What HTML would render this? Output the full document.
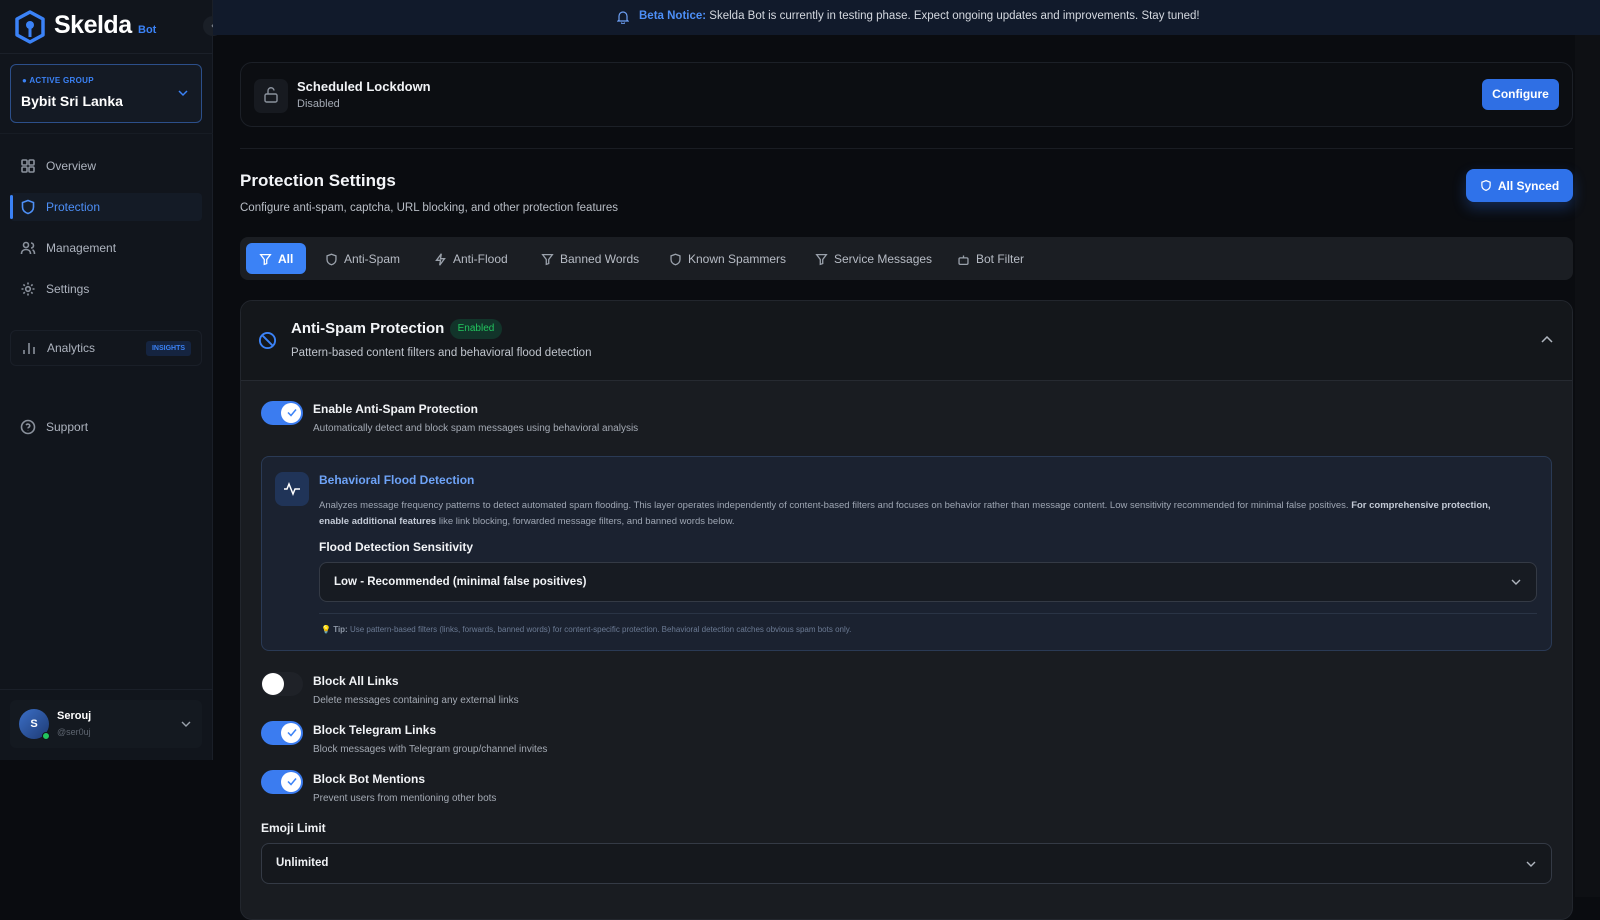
<!DOCTYPE html>
<html><head><meta charset="utf-8"><style>
*{box-sizing:border-box;margin:0;padding:0}
body{width:1600px;height:897px;overflow:hidden;background:#0a0c10;font-family:"Liberation Sans",sans-serif;color:#e8eaee;position:relative}
.a{position:absolute}
.sb{left:0;top:0;width:213px;height:760px;background:#11151c;border-right:1px solid #1a1f28}
.nav{left:20px;font-size:12px;color:#aeb4bf;display:flex;align-items:center;gap:10px}
.nav svg{width:16px;height:16px;stroke:#8a919c;fill:none;stroke-width:1.6}
.t{font-weight:bold;font-size:12px;color:#f1f3f6}
.d{font-size:10px;color:#a4aab4}
.tog{width:42px;height:24px;border-radius:12px;background:#3b7cf0}
.tog::after{content:"";position:absolute;right:2px;top:2px;width:20px;height:20px;border-radius:50%;background:#fff}
.tog svg{position:absolute;right:6px;top:7px;z-index:2}
.tab{top:252px;font-size:12px;color:#b7bcc5;display:flex;align-items:center;gap:6px}
.tab svg{width:13px;height:13px;stroke:#9aa1ab;fill:none;stroke-width:1.6}
</style></head><body>
<div class="a sb"></div>
<svg class="a" style="left:14px;top:10px" width="32" height="34" viewBox="0 0 32 34"><path d="M16 2 L29 9 V25 L16 32 L3 25 V9 Z" fill="none" stroke="#3b82f6" stroke-width="3.5" stroke-linejoin="round"/><circle cx="16" cy="15" r="4" fill="#3b82f6"/><rect x="14.5" y="15" width="3" height="12" fill="#3b82f6"/></svg>
<div class="a" style="left:54px;top:11px;font-size:25px;font-weight:bold;color:#fff;letter-spacing:-0.5px">Skelda</div>
<div class="a" style="left:138px;top:24px;font-size:11px;font-weight:bold;color:#3b82f6">Bot</div>
<div class="a" style="left:203px;top:16px;width:20px;height:20px;border-radius:50%;background:#1a1f27;color:#8a919c;font-size:11px;text-align:center;line-height:20px">‹</div>
<div class="a" style="left:0;top:53px;width:213px;height:1px;background:#1b2029"></div>
<div class="a" style="left:10px;top:64px;width:192px;height:59px;border:1px solid #2c4f8a;border-radius:6px;background:#141a24"></div>
<div class="a" style="left:22px;top:76px;font-size:8px;font-weight:bold;color:#3b82f6;letter-spacing:.3px">● ACTIVE GROUP</div>
<div class="a" style="left:21px;top:93px;font-size:14px;font-weight:bold;color:#fff">Bybit Sri Lanka</div>
<svg class="a" style="left:178px;top:89px" width="10" height="8"><path d="M1 2l4 4 4-4" stroke="#3b82f6" stroke-width="1.5" fill="none"/></svg>
<div class="a" style="left:0;top:133px;width:213px;height:1px;background:#171c24"></div>
<div class="a nav" style="top:158px"><svg viewBox="0 0 16 16"><rect x="2" y="2" width="5" height="5" rx="1"/><rect x="9" y="2" width="5" height="5" rx="1"/><rect x="2" y="9" width="5" height="5" rx="1"/><rect x="9" y="9" width="5" height="5" rx="1"/></svg>Overview</div>
<div class="a" style="left:10px;top:193px;width:192px;height:28px;background:#141b26;border-radius:4px"></div>
<div class="a" style="left:10px;top:195px;width:3px;height:24px;background:#3b82f6;border-radius:2px"></div>
<div class="a nav" style="top:199px;color:#4d8ff7"><svg viewBox="0 0 16 16" style="stroke:#4d8ff7"><path d="M8 1.5l5.5 2v4.5c0 3.5-2.5 5.5-5.5 6.5-3-1-5.5-3-5.5-6.5V3.5z"/></svg>Protection</div>
<div class="a nav" style="top:240px"><svg viewBox="0 0 16 16"><circle cx="6" cy="5" r="2.5"/><path d="M1.5 14c0-3 2-4.5 4.5-4.5s4.5 1.5 4.5 4.5M11 3a2.5 2.5 0 010 5M12.5 9.8c1.3.6 2 2 2 4.2"/></svg>Management</div>
<div class="a nav" style="top:281px"><svg viewBox="0 0 16 16"><circle cx="8" cy="8" r="2.3"/><path d="M8 1.5v2M8 12.5v2M1.5 8h2M12.5 8h2M3.4 3.4l1.4 1.4M11.2 11.2l1.4 1.4M3.4 12.6l1.4-1.4M11.2 4.8l1.4-1.4"/></svg>Settings</div>
<div class="a" style="left:10px;top:330px;width:192px;height:36px;border:1px solid #1a1f28;border-radius:6px;background:#12161d"></div>
<div class="a nav" style="top:340px;left:21px"><svg viewBox="0 0 16 16"><path d="M3 14v-4M8 14V3M13 14V7"/></svg>Analytics</div>
<div class="a" style="left:146px;top:341px;width:45px;height:15px;background:#152440;border-radius:3px;color:#3b82f6;font-size:7px;font-weight:bold;text-align:center;line-height:15px">INSIGHTS</div>
<div class="a nav" style="top:419px"><svg viewBox="0 0 16 16"><circle cx="8" cy="8" r="6.5"/><path d="M6.2 6.2a1.9 1.9 0 013.6.6c0 1.3-1.8 1.6-1.8 2.6M8 11.5v.3"/></svg>Support</div>
<div class="a" style="left:0;top:689px;width:213px;height:1px;background:#1b2029"></div>
<div class="a" style="left:10px;top:700px;width:192px;height:48px;border-radius:6px;background:#141920"></div>
<div class="a" style="left:19px;top:709px;width:30px;height:30px;border-radius:50%;background:linear-gradient(135deg,#3b6fc7,#1e3a73);color:#fff;font-weight:bold;font-size:11px;text-align:center;line-height:30px">S</div>
<div class="a" style="left:42px;top:732px;width:8px;height:8px;border-radius:50%;background:#22c55e;border:1px solid #11151c"></div>
<div class="a" style="left:57px;top:710px;font-size:11px;font-weight:bold;color:#fff">Serouj</div>
<div class="a" style="left:57px;top:727px;font-size:9px;color:#5e6570">@ser0uj</div>
<svg class="a" style="left:181px;top:720px" width="10" height="8"><path d="M1 2l4 4 4-4" stroke="#9aa1ab" stroke-width="1.4" fill="none"/></svg>
<div class="a" style="left:213px;top:0;width:1387px;height:35px;background:#111a2b"></div>
<svg class="a" style="left:617px;top:10px" width="12" height="14" viewBox="0 0 12 14"><path d="M2 10V6a4 4 0 018 0v4l1 1H1zM4.5 12.5a1.5 1.5 0 003 0" stroke="#6ea0f5" fill="none" stroke-width="1.2"/></svg>
<div class="a" style="left:639px;top:10px;font-size:11.5px;color:#d4d8df"><b style="color:#4d8ff7">Beta Notice:</b> Skelda Bot is currently in testing phase. Expect ongoing updates and improvements. Stay tuned!</div>
<div class="a" style="left:1575px;top:35px;width:25px;height:862px;background:#0e1014"></div>
<div class="a" style="left:240px;top:62px;width:1333px;height:65px;border:1px solid #1c2027;border-radius:12px;background:#0c0e12"></div>
<div class="a" style="left:254px;top:79px;width:34px;height:34px;border-radius:7px;background:#171a20"></div>
<svg class="a" style="left:263px;top:86px" width="16" height="18" viewBox="0 0 16 18"><rect x="2" y="8" width="12" height="8" rx="1.5" stroke="#8a919c" fill="none" stroke-width="1.4"/><path d="M5 8V5a3 3 0 016-0.5" stroke="#8a919c" fill="none" stroke-width="1.4"/></svg>
<div class="a" style="left:297px;top:79px;font-size:13px;font-weight:bold;color:#f1f3f6">Scheduled Lockdown</div>
<div class="a" style="left:297px;top:98px;font-size:11px;color:#a4aab4">Disabled</div>
<div class="a" style="left:1482px;top:79px;width:77px;height:31px;border-radius:6px;background:#2f6fe4;color:#fff;font-size:12px;font-weight:bold;text-align:center;line-height:31px">Configure</div>
<div class="a" style="left:240px;top:148px;width:1333px;height:1px;background:#1a1d23"></div>
<div class="a" style="left:240px;top:171px;font-size:17px;font-weight:bold;color:#f3f5f8">Protection Settings</div>
<div class="a" style="left:240px;top:202px;font-size:11.5px;color:#b9bec6">Configure anti-spam, captcha, URL blocking, and other protection features</div>
<div class="a" style="left:1466px;top:169px;width:107px;height:33px;border-radius:8px;background:#2f72ea;box-shadow:0 6px 14px rgba(47,114,234,.3);color:#fff;font-size:12px;font-weight:bold;display:flex;align-items:center;justify-content:center;gap:6px"><svg width="12" height="13" viewBox="0 0 16 16"><path d="M8 1.5l5.5 2v4.5c0 3.5-2.5 5.5-5.5 6.5-3-1-5.5-3-5.5-6.5V3.5z" stroke="#fff" fill="none" stroke-width="1.6"/></svg>All Synced</div>
<div class="a" style="left:240px;top:237px;width:1333px;height:43px;border-radius:8px;background:#1b1e23"></div>
<div class="a" style="left:246px;top:243px;width:60px;height:31px;border-radius:6px;background:#3b82f6"></div>
<div class="a tab" style="left:259px;color:#fff;font-weight:bold"><svg viewBox="0 0 16 16" style="stroke:#fff"><path d="M2 2h12L9.5 8v5L6.5 14V8z"/></svg>All</div>
<div class="a tab" style="left:325px"><svg viewBox="0 0 16 16"><path d="M8 1.5l5.5 2v4.5c0 3.5-2.5 5.5-5.5 6.5-3-1-5.5-3-5.5-6.5V3.5z"/></svg>Anti-Spam</div>
<div class="a tab" style="left:434px"><svg viewBox="0 0 16 16"><path d="M9 1L3 9h5l-1 6 6-8H8z"/></svg>Anti-Flood</div>
<div class="a tab" style="left:541px"><svg viewBox="0 0 16 16"><path d="M2 2h12L9.5 8v5L6.5 14V8z"/></svg>Banned Words</div>
<div class="a tab" style="left:669px"><svg viewBox="0 0 16 16"><path d="M8 1.5l5.5 2v4.5c0 3.5-2.5 5.5-5.5 6.5-3-1-5.5-3-5.5-6.5V3.5z"/></svg>Known Spammers</div>
<div class="a tab" style="left:815px"><svg viewBox="0 0 16 16"><path d="M2 2h12L9.5 8v5L6.5 14V8z"/></svg>Service Messages</div>
<div class="a tab" style="left:957px"><svg viewBox="0 0 16 16"><rect x="2.5" y="6" width="11" height="8" rx="1.5"/><path d="M8 6V3M6 10h.1M10 10h.1"/></svg>Bot Filter</div>
<div class="a" style="left:240px;top:300px;width:1333px;height:620px;border:1px solid #22262d;border-radius:12px;background:#191c21;overflow:hidden">
<div style="height:80px;background:#14171b;border-bottom:1px solid #262a31"></div></div>
<svg class="a" style="left:258px;top:331px" width="19" height="19" viewBox="0 0 20 20"><circle cx="10" cy="10" r="8" stroke="#3b82f6" stroke-width="2" fill="none"/><path d="M4.5 4.5l11 11" stroke="#3b82f6" stroke-width="2"/></svg>
<div class="a" style="left:291px;top:320px;font-size:15px;font-weight:bold;color:#f3f5f8">Anti-Spam Protection</div>
<div class="a" style="left:450px;top:319px;width:52px;height:20px;border-radius:10px;background:#12342a;color:#22c55e;font-size:10px;text-align:center;line-height:20px">Enabled</div>
<div class="a" style="left:291px;top:347px;font-size:11.5px;color:#c0c5cd">Pattern-based content filters and behavioral flood detection</div>
<svg class="a" style="left:1541px;top:336px" width="12" height="8"><path d="M1 6l5-5 5 5" stroke="#b0b6bf" stroke-width="1.5" fill="none"/></svg>
<div class="a tog" style="left:261px;top:401px"><svg width="10" height="9"><path d="M1 4.5l3 3 5-6" stroke="#3b82f6" stroke-width="1.5" fill="none"/></svg></div>
<div class="a t" style="left:313px;top:402px">Enable Anti-Spam Protection</div>
<div class="a d" style="left:313px;top:423px">Automatically detect and block spam messages using behavioral analysis</div>
<div class="a" style="left:261px;top:456px;width:1291px;height:195px;border:1px solid #2a3a55;border-radius:8px;background:#1b2230"></div>
<div class="a" style="left:275px;top:472px;width:34px;height:34px;border-radius:8px;background:#203458"></div>
<svg class="a" style="left:283px;top:481px" width="18" height="16" viewBox="0 0 18 16"><path d="M1 8h3l2-5 4 10 2-5h5" stroke="#fff" stroke-width="1.5" fill="none"/></svg>
<div class="a" style="left:319px;top:473px;font-size:12px;font-weight:bold;color:#6ea3f7">Behavioral Flood Detection</div>
<div class="a" style="left:319px;top:498px;width:1180px;font-size:9.5px;line-height:16px;color:#9ea6b3">Analyzes message frequency patterns to detect automated spam flooding. This layer operates independently of content-based filters and focuses on behavior rather than message content. Low sensitivity recommended for minimal false positives. <b style="color:#c3cad6">For comprehensive protection, enable additional features</b> like link blocking, forwarded message filters, and banned words below.</div>
<div class="a t" style="left:319px;top:540px">Flood Detection Sensitivity</div>
<div class="a" style="left:319px;top:562px;width:1218px;height:40px;border:1px solid #343a45;border-radius:8px;background:#171b22"></div>
<div class="a" style="left:334px;top:576px;font-size:11.5px;font-weight:bold;color:#f1f3f6">Low - Recommended (minimal false positives)</div>
<svg class="a" style="left:1511px;top:578px" width="10" height="8"><path d="M1 2l4 4 4-4" stroke="#b0b6bf" stroke-width="1.4" fill="none"/></svg>
<div class="a" style="left:319px;top:613px;width:1218px;height:1px;background:#2a3445"></div>
<div class="a" style="left:321px;top:625px;font-size:8px;color:#6b7a93"><span style="color:#d6a93b">💡</span> <b style="color:#8d97a6">Tip:</b> Use pattern-based filters (links, forwards, banned words) for content-specific protection. Behavioral detection catches obvious spam bots only.</div>
<div class="a" style="left:261px;top:672px;width:42px;height:24px;border-radius:12px;background:#1f2228"></div>
<div class="a" style="left:262px;top:673px;width:22px;height:22px;border-radius:50%;background:#fff"></div>
<div class="a t" style="left:313px;top:674px">Block All Links</div>
<div class="a d" style="left:313px;top:695px">Delete messages containing any external links</div>
<div class="a tog" style="left:261px;top:721px"><svg width="10" height="9"><path d="M1 4.5l3 3 5-6" stroke="#3b82f6" stroke-width="1.5" fill="none"/></svg></div>
<div class="a t" style="left:313px;top:723px">Block Telegram Links</div>
<div class="a d" style="left:313px;top:744px">Block messages with Telegram group/channel invites</div>
<div class="a tog" style="left:261px;top:770px"><svg width="10" height="9"><path d="M1 4.5l3 3 5-6" stroke="#3b82f6" stroke-width="1.5" fill="none"/></svg></div>
<div class="a t" style="left:313px;top:772px">Block Bot Mentions</div>
<div class="a d" style="left:313px;top:793px">Prevent users from mentioning other bots</div>
<div class="a t" style="left:261px;top:821px">Emoji Limit</div>
<div class="a" style="left:261px;top:843px;width:1291px;height:41px;border:1px solid #343a45;border-radius:8px;background:#15181d"></div>
<div class="a" style="left:276px;top:857px;font-size:11.5px;font-weight:bold;color:#f1f3f6">Unlimited</div>
<svg class="a" style="left:1526px;top:860px" width="10" height="8"><path d="M1 2l4 4 4-4" stroke="#b0b6bf" stroke-width="1.4" fill="none"/></svg>
</body></html>
